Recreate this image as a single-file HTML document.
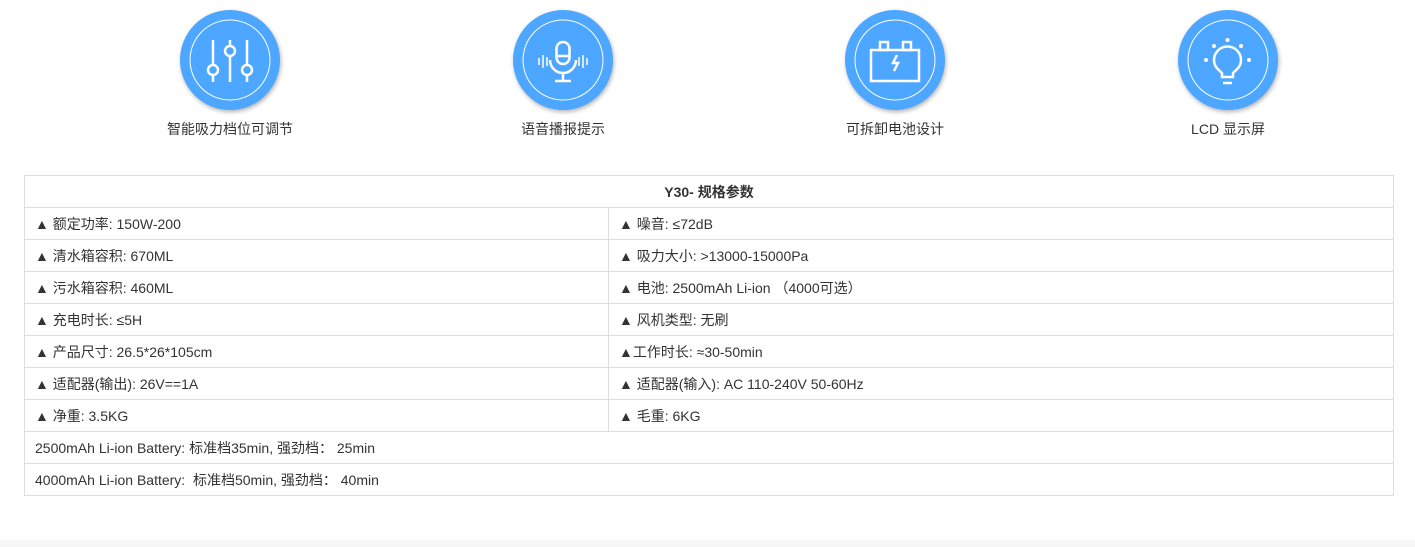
<!DOCTYPE html>
<html><head><meta charset="utf-8"><style>
*{margin:0;padding:0;box-sizing:border-box}
body{width:1415px;height:547px;background:#fff;font-family:"Liberation Sans","Noto Sans CJK SC",sans-serif;color:#333;position:relative;overflow:hidden}
.ic{position:absolute;top:10px;width:100px;height:100px;border-radius:50%;background:#4da6ff;box-shadow:1px 2px 4px rgba(0,0,0,.3)}
.ic svg{position:absolute;left:0;top:0}
.lb{position:absolute;top:120px;width:300px;text-align:center;font-size:14px;line-height:18px}
table{position:absolute;left:24px;top:175px;width:1370px;border-collapse:collapse;font-size:14px}
td{border:1px solid #ddd;height:32px;padding:0 10px;line-height:18px}
th{border:1px solid #ddd;height:32px;font-weight:bold;font-size:14px}
.foot{position:absolute;left:0;top:540px;width:1415px;height:7px;background:#f7f7f7}
</style></head><body>
<div class="ic" style="left:180px"><svg width="100" height="100" viewBox="0 0 100 100" fill="none" stroke="#fff" stroke-width="2.5"><circle cx="50" cy="50" r="40" stroke-width="1"/><path d="M33 30v42M50 30v42M67 30v42"/><circle cx="33" cy="60" r="5" fill="#4da6ff"/><circle cx="50" cy="41" r="5" fill="#4da6ff"/><circle cx="67" cy="60" r="5" fill="#4da6ff"/></svg></div>
<div class="ic" style="left:513px"><svg width="100" height="100" viewBox="0 0 100 100" fill="none" stroke="#fff" stroke-width="2.5"><circle cx="50" cy="50" r="40" stroke-width="1"/><rect x="43.5" y="32" width="13" height="22" rx="6.5"/><path d="M43.5 46h13"/><path d="M37 50a13 13 0 0 0 26 0M50 63v8M42 71h16"/><path d="M26 48v7M30 45v13M34 47v9M66 47v9M70 45v13M74 48v7" stroke-width="1.5"/></svg></div>
<div class="ic" style="left:845px"><svg width="100" height="100" viewBox="0 0 100 100" fill="none" stroke="#fff" stroke-width="2.5"><circle cx="50" cy="50" r="40" stroke-width="1"/><rect x="26" y="40" width="48" height="31"/><rect x="35" y="32" width="8" height="8"/><rect x="58" y="32" width="8" height="8"/><path d="M52 45l-4 8h5l-4 8"/></svg></div>
<div class="ic" style="left:1178px"><svg width="100" height="100" viewBox="0 0 100 100" fill="none" stroke="#fff" stroke-width="2.5"><circle cx="50" cy="50" r="40" stroke-width="1"/><path d="M44 67v-4c-3-3-8-6-8-13a13.5 13.5 0 0 1 27 0c0 7-5 10-8 13v4zM45 73h9"/><g fill="#fff" stroke="none"><circle cx="49.5" cy="30" r="2"/><circle cx="36" cy="36" r="2"/><circle cx="63" cy="36" r="2"/><circle cx="28" cy="50" r="2"/><circle cx="71" cy="50" r="2"/></g></svg></div>
<div class="lb" style="left:80px">智能吸力档位可调节</div>
<div class="lb" style="left:413px">语音播报提示</div>
<div class="lb" style="left:745px">可拆卸电池设计</div>
<div class="lb" style="left:1078px">LCD 显示屏</div>
<table>
<tr><th colspan="2">Y30- 规格参数</th></tr>
<tr><td style="width:584px">▲ 额定功率: 150W-200</td><td>▲ 噪音: ≤72dB</td></tr>
<tr><td>▲ 清水箱容积: 670ML</td><td>▲ 吸力大小: &gt;13000-15000Pa</td></tr>
<tr><td>▲ 污水箱容积: 460ML</td><td>▲ 电池: 2500mAh Li-ion （4000可选）</td></tr>
<tr><td>▲ 充电时长: ≤5H</td><td>▲ 风机类型: 无刷</td></tr>
<tr><td>▲ 产品尺寸: 26.5*26*105cm</td><td>▲工作时长: ≈30-50min</td></tr>
<tr><td>▲ 适配器(输出): 26V==1A</td><td>▲ 适配器(输入): AC 110-240V 50-60Hz</td></tr>
<tr><td>▲ 净重: 3.5KG</td><td>▲ 毛重: 6KG</td></tr>
<tr><td colspan="2">2500mAh Li-ion Battery: 标准档35min, 强劲档：&nbsp;25min</td></tr>
<tr><td colspan="2">4000mAh Li-ion Battery:&nbsp; 标准档50min, 强劲档：&nbsp;40min</td></tr>
</table>
<div class="foot"></div>
</body></html>
